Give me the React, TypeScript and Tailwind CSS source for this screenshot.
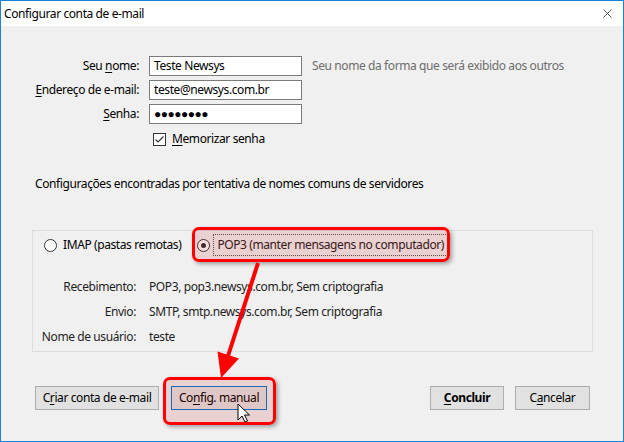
import { X } from "lucide-react";

const font = { fontFamily: '"Noto Sans", "Open Sans", sans-serif' };

function Key({ children }: { children: string }) {
    return <span className="underline underline-offset-2">{children}</span>;
}

function Radio({ checked }: { checked?: boolean }) {
    return (
        <span className="w-[13px] h-[13px] rounded-full border border-[#333] bg-white flex items-center justify-center shrink-0">
            {checked && <span className="w-[5px] h-[5px] rounded-full bg-[#333]" />}
        </span>
    );
}

function Button({ children, className = "", bold = false }: { children: React.ReactNode; className?: string; bold?: boolean }) {
    return (
        <div
            className={`h-[24px] flex items-center justify-center border bg-[#e1e1e1] text-[12px] text-black ${bold ? "font-bold" : ""} ${className}`}
        >
            {children}
        </div>
    );
}

export default function App() {
    return (
        <div
            className="relative w-[624px] h-[442px] bg-[#f0f0f0] border border-[#1883d7] flex flex-col overflow-hidden text-[12px] tracking-[-0.4px] text-black"
            style={font}
        >
            {/* title bar */}
            <div className="h-[25px] bg-white flex items-center justify-between pl-[3px] pr-[8px] shrink-0">
                <span className="text-[12px] text-black">Configurar conta de e-mail</span>
                <X size={15} strokeWidth={1} className="text-black" />
            </div>

            {/* account fields */}
            <div className="grid grid-cols-[138px_153px_auto] gap-x-[10px] gap-y-[4px] mt-[30px] items-center">
                <div className="text-right">Seu <Key>n</Key>ome:</div>
                <div className="h-[20px] bg-white border border-[#7a7a7a] px-[4px] flex items-center">Teste Newsys</div>
                <div className="text-[#6d6d6d]">Seu nome da forma que será exibido aos outros</div>

                <div className="text-right"><Key>E</Key>ndereço de e-mail:</div>
                <div className="h-[20px] bg-white border border-[#7a7a7a] px-[4px] flex items-center">teste@newsys.com.br</div>
                <div />

                <div className="text-right"><Key>S</Key>enha:</div>
                <div className="h-[20px] bg-white border border-[#7a7a7a] px-[4px] flex items-center tracking-[-0.5px] text-[12px]">●●●●●●●●</div>
                <div />
            </div>

            <div className="flex items-center gap-[6px] ml-[152px] mt-[8px] h-[14px]">
                <span className="w-[13px] h-[13px] border border-[#333] bg-white flex items-center justify-center">
                    <svg width="11" height="11" viewBox="0 0 11 11" fill="none" stroke="#333" strokeWidth="1.2">
                        <path d="M1.5 5.5 L4 8 L9.5 2.5" />
                    </svg>
                </span>
                <span><Key>M</Key>emorizar senha</span>
            </div>

            <div className="ml-[34px] mt-[29px]">Configurações encontradas por tentativa de nomes comuns de servidores</div>

            {/* server group */}
            <div className="ml-[31px] mt-[37px] w-[561px] h-[122px] border border-[#dcdcdc] flex flex-col">
                <div className="flex items-center h-[28px] pl-[11px]">
                    <Radio />
                    <span className="ml-[6px]">IMAP (pastas remotas)</span>
                    <span className="ml-[16px]"><Radio checked /></span>
                    <span className="ml-[3px] px-[3px] py-[1px] border border-dotted border-[#555] text-[#222]">POP3 (manter mensagens no computador)</span>
                </div>
                <div className="grid grid-cols-[103px_auto] gap-x-[13px] gap-y-[7px] mt-[19px] text-[#1e1e1e]">
                    <div className="text-right">Recebimento:</div>
                    <div>POP3, pop3.newsys.com.br, Sem criptografia</div>
                    <div className="text-right">Envio:</div>
                    <div>SMTP, smtp.newsys.com.br, Sem criptografia</div>
                    <div className="text-right">Nome de usuário:</div>
                    <div>teste</div>
                </div>
            </div>

            {/* buttons */}
            <div className="flex items-center mt-[34px] pl-[34px] pr-[33px]">
                <Button className="w-[124px] border-[#adadad]">C<Key>r</Key>iar conta de e-mail</Button>
                <Button className="w-[96px] ml-[12px] border-[#0078d7] bg-[#e5e5e5]">Co<Key>n</Key>fig. manual</Button>
                <div className="flex-1" />
                <Button bold className="w-[74px] border-[#adadad]"><Key>C</Key>oncluir</Button>
                <Button className="w-[75px] ml-[11px] border-[#adadad]">C<Key>a</Key>ncelar</Button>
            </div>

            {/* annotation overlays */}
            <div className="absolute left-[191px] top-[226px] w-[258px] h-[35px] rounded-[7px] border-[3px] border-[#ff0000] bg-[rgba(190,0,0,0.13)] shadow-[2px_2px_4px_rgba(0,0,0,0.35)] pointer-events-none" />
            <div className="absolute left-[162px] top-[376px] w-[113px] h-[48px] rounded-[7px] border-[3px] border-[#ff0000] bg-[rgba(190,0,0,0.13)] shadow-[2px_2px_4px_rgba(0,0,0,0.35)] pointer-events-none" />
            <svg className="absolute left-0 top-0 pointer-events-none" width="624" height="442" viewBox="0 0 624 442">
                <line x1="257" y1="262" x2="227" y2="355" stroke="#ff0000" strokeWidth="4" />
                <polygon points="220,377 216.5,350.5 238,357.5" fill="#ff0000" />
                <path d="M237 403 L237 419 L241 415 L244 421 L246.5 420 L243.5 414 L248.5 414 Z" fill="#fff" stroke="#000" strokeWidth="1" strokeLinejoin="round" />
            </svg>
        </div>
    );
}
